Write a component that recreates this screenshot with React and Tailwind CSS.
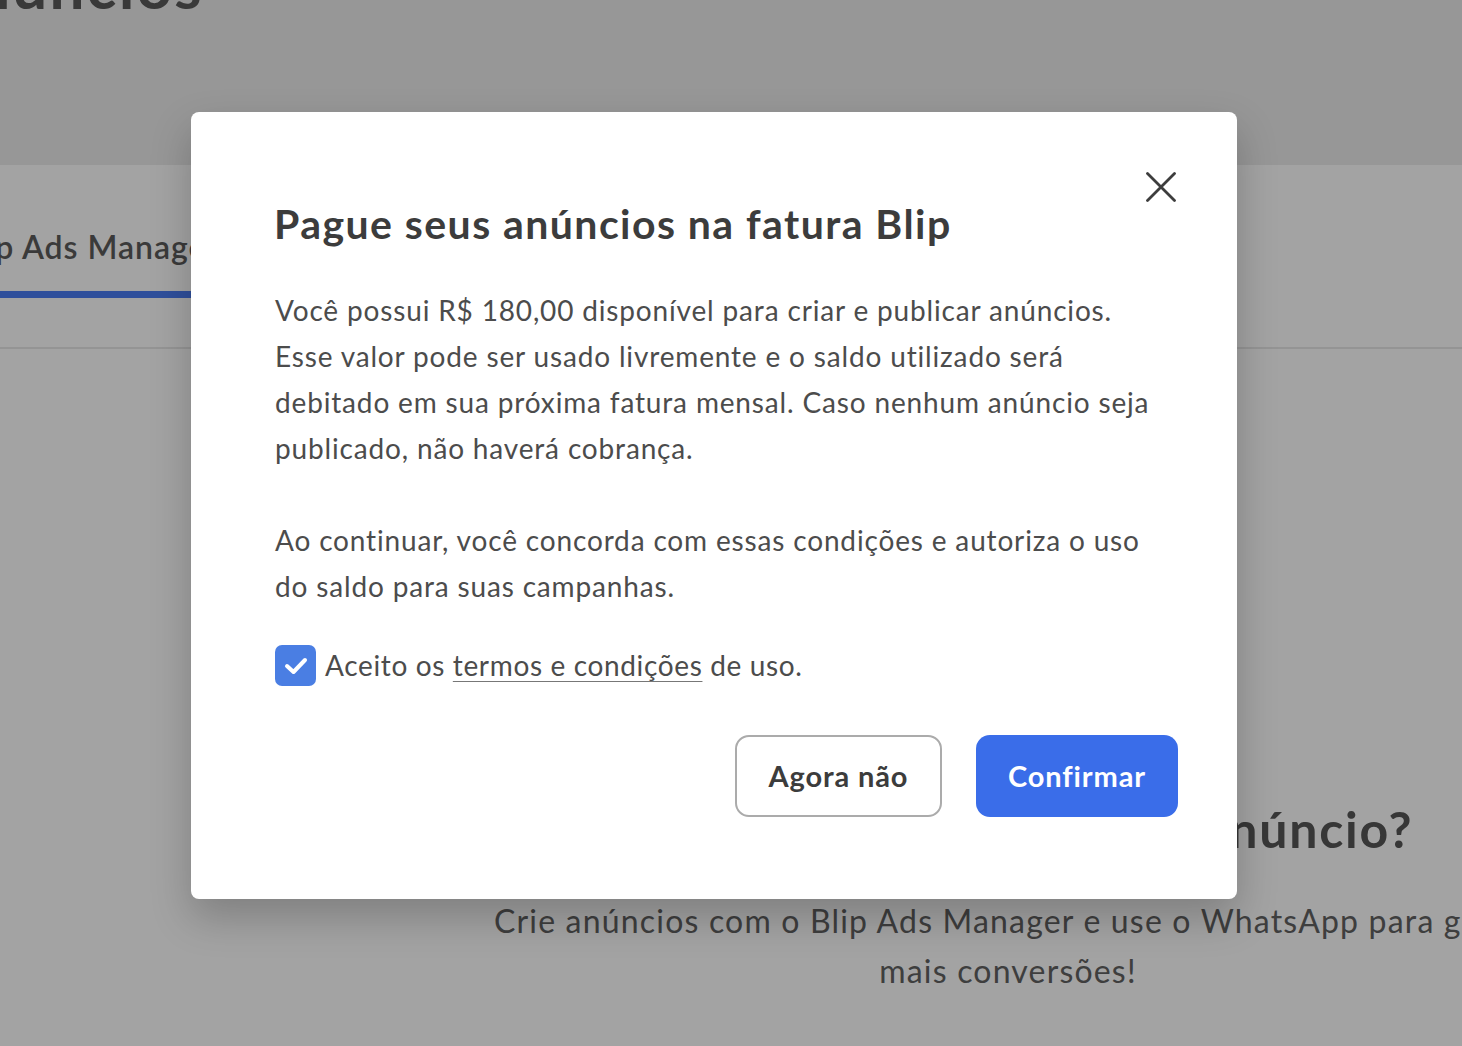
import React from "react";

export default function App() {
  return (
    <div className="relative h-[1046px] w-[1462px] overflow-hidden bg-white font-['Lato',sans-serif]">
      {/* Background page */}
      <header className="flow-root h-[165px] bg-[#ececec]">
        <h1 className="-ml-[70px] -mt-[46px] text-[62px] font-bold leading-[62px] tracking-[0.035em] text-[#5a5a5a]">Anúncios</h1>
      </header>
      <nav className="flex h-[184px] flex-col border-b-2 border-[#e8e8e8]">
        <div className="-ml-[44px] mt-[62px] w-fit">
          <div className="text-[32px] font-semibold leading-[40px] tracking-[0.03em] text-[#5c5c5c]">Blip Ads Manager</div>
          <div className="mt-[24px] h-[7px] w-[300px] bg-[#4a7cf2]"></div>
        </div>
      </nav>
      <section className="ml-[488px] w-[1040px] pt-[450px] text-center">
        <h2 className="ml-[14px] text-[50px] font-bold leading-[60px] tracking-[0.035em] text-[#575757]">Como criar seu primeiro anúncio?</h2>
        <p className="mt-[37px] whitespace-nowrap text-[32px] leading-[50px] tracking-[0.037em] text-[#626262]">
          Crie anúncios com o Blip Ads Manager e use o WhatsApp para gerar
          <br />
          mais conversões!
        </p>
      </section>

      {/* Overlay */}
      <div className="absolute inset-0 bg-black/[0.36]">
        <div className="relative ml-[191px] mt-[112px] h-[787px] w-[1046px] rounded-[8px] bg-white pl-[84px] pr-[59px] pt-[88px] shadow-[0_18px_40px_rgba(0,0,0,0.22)]">
          <button className="absolute right-[61px] top-[60px] h-[30px] w-[30px]" aria-label="Fechar">
            <svg viewBox="0 0 30 30" className="h-[30px] w-[30px]">
              <path d="M1.5 1.5 L28.5 28.5 M28.5 1.5 L1.5 28.5" stroke="#3d3d3d" strokeWidth="2.8" strokeLinecap="round" />
            </svg>
          </button>
          <h2 className="-ml-[1px] text-[41px] font-bold leading-[48px] tracking-[0.035em] text-[#3c3c3c]">Pague seus anúncios na fatura Blip</h2>
          <div className="mt-[39px] whitespace-nowrap text-[28px] leading-[46px] tracking-[0.03em] text-[#4c4c4c]">
            <p>
              Você possui R$ 180,00 disponível para criar e publicar anúncios.
              <br />
              Esse valor pode ser usado livremente e o saldo utilizado será
              <br />
              debitado em sua próxima fatura mensal. Caso nenhum anúncio seja
              <br />
              publicado, não haverá cobrança.
            </p>
            <p className="mt-[46px]">
              Ao continuar, você concorda com essas condições e autoriza o uso
              <br />
              do saldo para suas campanhas.
            </p>
          </div>
          <label className="mt-[33px] flex items-center gap-[9px] text-[28px] leading-[46px] tracking-[0.023em] text-[#4c4c4c]">
            <span className="flex h-[41px] w-[41px] items-center justify-center rounded-[7px] bg-[#4a7ee3]">
              <svg viewBox="0 0 40 40" className="h-[40px] w-[40px]">
                <path d="M11 21 L17.5 27 L29 15" fill="none" stroke="white" strokeWidth="4" strokeLinecap="round" strokeLinejoin="round" />
              </svg>
            </span>
            <span>
              Aceito os <span className="underline decoration-[#777] decoration-1 underline-offset-[5px]">termos e condições</span> de uso.
            </span>
          </label>
          <div className="mt-[47px] flex justify-end gap-[34px]">
            <button className="h-[82px] w-[207px] rounded-[14px] border-2 border-[#ababab] bg-white text-[29px] font-bold tracking-[0.03em] text-[#3c3c3c]">Agora não</button>
            <button className="h-[82px] w-[202px] rounded-[14px] bg-[#3a6de9] text-[29px] font-bold tracking-[0.03em] text-white">Confirmar</button>
          </div>
        </div>
      </div>
    </div>
  );
}
